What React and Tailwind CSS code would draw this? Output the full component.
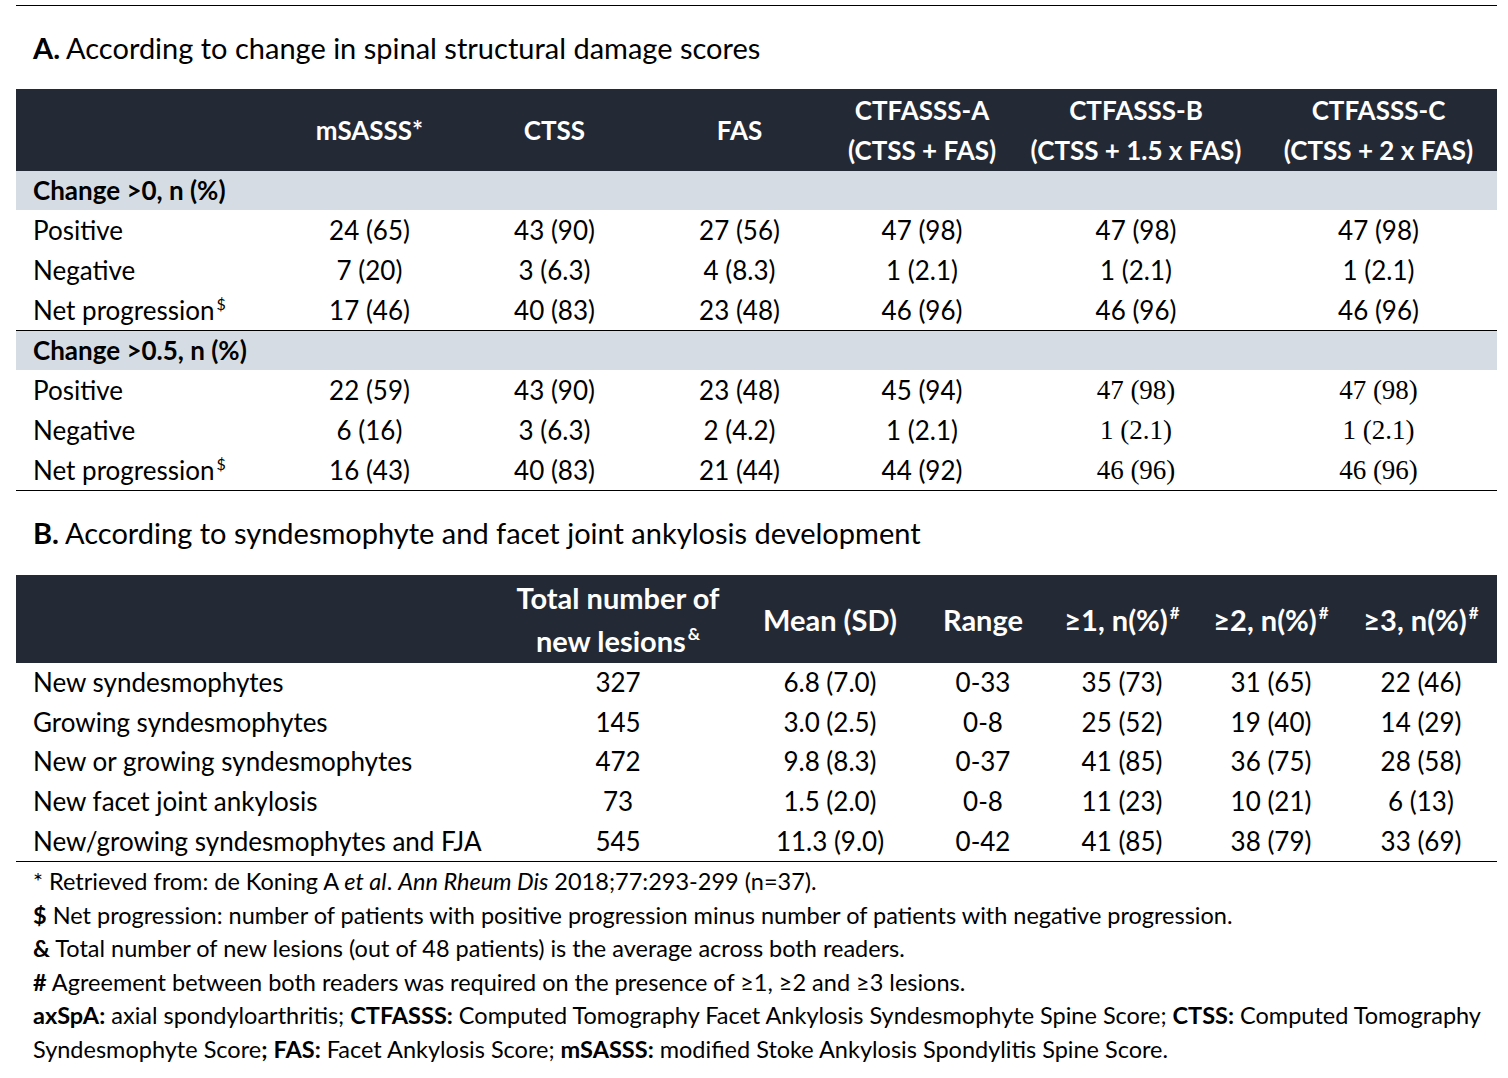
import React from 'react';

const FONT = { fontFamily: 'Lato, "Open Sans", sans-serif' };
const SERIF = { fontFamily: '"Liberation Serif", serif' };

const groupA = [
  {
    title: 'Change >0, n (%)',
    rows: [
      ['Positive', '24 (65)', '43 (90)', '27 (56)', '47 (98)', '47 (98)', '47 (98)'],
      ['Negative', '7 (20)', '3 (6.3)', '4 (8.3)', '1 (2.1)', '1 (2.1)', '1 (2.1)'],
      ['Net progression', '17 (46)', '40 (83)', '23 (48)', '46 (96)', '46 (96)', '46 (96)'],
    ],
    serif: false,
  },
  {
    title: 'Change >0.5, n (%)',
    rows: [
      ['Positive', '22 (59)', '43 (90)', '23 (48)', '45 (94)', '47 (98)', '47 (98)'],
      ['Negative', '6 (16)', '3 (6.3)', '2 (4.2)', '1 (2.1)', '1 (2.1)', '1 (2.1)'],
      ['Net progression', '16 (43)', '40 (83)', '21 (44)', '44 (92)', '46 (96)', '46 (96)'],
    ],
    serif: true,
  },
];

const rowsB = [
  ['New syndesmophytes', '327', '6.8 (7.0)', '0-33', '35 (73)', '31 (65)', '22 (46)'],
  ['Growing syndesmophytes', '145', '3.0 (2.5)', '0-8', '25 (52)', '19 (40)', '14 (29)'],
  ['New or growing syndesmophytes', '472', '9.8 (8.3)', '0-37', '41 (85)', '36 (75)', '28 (58)'],
  ['New facet joint ankylosis', '73', '1.5 (2.0)', '0-8', '11 (23)', '10 (21)', '6 (13)'],
  ['New/growing syndesmophytes and FJA', '545', '11.3 (9.0)', '0-42', '41 (85)', '38 (79)', '33 (69)'],
];

const colsA = 'grid-cols-[261px_185px_185px_185px_180px_248px_237px]';
const colsB = 'grid-cols-[479px_246px_178px_128px_150px_148px_152px]';

function Label({ text }) {
  if (text === 'Net progression') {
    return (
      <span>
        Net progression<sup className="text-[16px] relative -top-[10px] ml-[2px]">$</sup>
      </span>
    );
  }
  return <span>{text}</span>;
}

export default function App() {
  return (
    <div className="w-[1508px] h-[1078px] bg-white text-black pt-[5px] pl-[16px] pr-[11px]" style={FONT}>
      <div className="border-t-[1.5px] border-black">
        <h2 className="h-[83px] flex items-center pl-[17px] text-[29px] font-normal">
          <span className="font-bold mr-[6px]">A.</span>According to change in spinal structural damage scores
        </h2>

        {/* Table A */}
        <div className="text-[26px]">
          <div className={`grid ${colsA} h-[82px] bg-[#242a35] text-white font-bold items-center text-center leading-[40px]`}>
            <div />
            <div>mSASSS*</div>
            <div>CTSS</div>
            <div>FAS</div>
            <div className="whitespace-nowrap">CTFASSS-A<br />(CTSS + FAS)</div>
            <div className="whitespace-nowrap">CTFASSS-B<br />(CTSS + 1.5 x FAS)</div>
            <div className="whitespace-nowrap">CTFASSS-C<br />(CTSS + 2 x FAS)</div>
          </div>
          {groupA.map((g) => (
            <div key={g.title} className="border-b-[1.5px] border-black">
              <div className="h-[39px] bg-[#d5dce4] flex items-center pl-[17px] font-bold">{g.title}</div>
              {g.rows.map((r) => (
                <div key={r[0]} className={`grid ${colsA} h-[40px] items-center text-center`}>
                  <div className="text-left pl-[17px]"><Label text={r[0]} /></div>
                  {r.slice(1).map((c, i) => (
                    <div key={i} style={g.serif && i >= 4 ? SERIF : undefined} className={g.serif && i >= 4 ? 'text-[27px]' : ''}>
                      {c}
                    </div>
                  ))}
                </div>
              ))}
            </div>
          ))}
        </div>

        <h2 className="h-[84px] flex items-center pl-[17px] text-[29px] font-normal">
          <span className="font-bold mr-[6px]">B.</span>According to syndesmophyte and facet joint ankylosis development
        </h2>

        {/* Table B */}
        <div className="text-[26px] border-b-[1.5px] border-black">
          <div className={`grid ${colsB} h-[88px] bg-[#242a35] text-white font-bold items-center text-center text-[29px] leading-[43px]`}>
            <div />
            <div className="whitespace-nowrap">
              Total number of<br />new lesions<sup className="text-[17px] relative -top-[12px] ml-[2px]">&amp;</sup>
            </div>
            <div>Mean (SD)</div>
            <div>Range</div>
            <div className="whitespace-nowrap">≥1, n(%)<sup className="text-[17px] relative -top-[12px] ml-[2px]">#</sup></div>
            <div className="whitespace-nowrap">≥2, n(%)<sup className="text-[17px] relative -top-[12px] ml-[2px]">#</sup></div>
            <div className="whitespace-nowrap">≥3, n(%)<sup className="text-[17px] relative -top-[12px] ml-[2px]">#</sup></div>
          </div>
          <div>
            {rowsB.map((r) => (
              <div key={r[0]} className={`grid ${colsB} h-[39.6px] items-center text-center`}>
                <div className="text-left pl-[17px] whitespace-nowrap">{r[0]}</div>
                {r.slice(1).map((c, i) => (
                  <div key={i}>{c}</div>
                ))}
              </div>
            ))}
          </div>
        </div>

        {/* Footnotes */}
        <div className="pl-[17px] pt-[3px] text-[23.5px] leading-[33.6px] whitespace-nowrap">
          <p>* Retrieved from: de Koning A <i>et al</i>. <i>Ann Rheum Dis</i> 2018;77:293-299 (n=37).</p>
          <p><b>$</b> Net progression: number of patients with positive progression minus number of patients with negative progression.</p>
          <p><b>&amp;</b> Total number of new lesions (out of 48 patients) is the average across both readers.</p>
          <p><b>#</b> Agreement between both readers was required on the presence of ≥1, ≥2 and ≥3 lesions.</p>
          <p>
            <b>axSpA:</b> axial spondyloarthritis; <b>CTFASSS:</b> Computed Tomography Facet Ankylosis Syndesmophyte Spine Score;{' '}
            <b>CTSS:</b> Computed Tomography
            <br />
            Syndesmophyte Score<b>;</b> <b>FAS:</b> Facet Ankylosis Score; <b>mSASSS:</b> modified Stoke Ankylosis Spondylitis Spine Score.
          </p>
        </div>
      </div>
    </div>
  );
}
